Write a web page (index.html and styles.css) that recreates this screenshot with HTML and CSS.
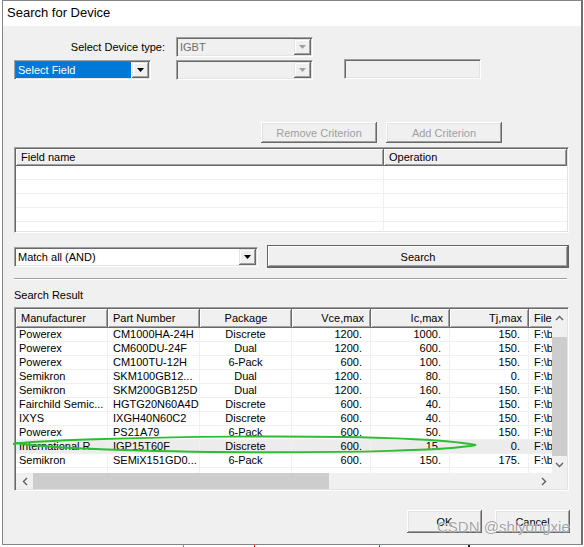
FILE: index.html
```html
<!DOCTYPE html>
<html lang="en">
<head>
    <meta charset="UTF-8">
    <title>Search for Device</title>
    <link rel="stylesheet" href="styles.css">
</head>
<body>
    <div class="window">
        <div class="titlebar">Search for Device</div>
        <div class="dialog">

            <div class="row-type">
                <span class="label">Select Device type:</span>
                <div class="combo disabled">
                    <span class="combo-text">IGBT</span>
                    <span class="drop"><svg width="7" height="4"><path d="M0 0h7L3.5 4z"/></svg></span>
                </div>
            </div>

            <div class="row-field">
                <div class="combo">
                    <span class="combo-text selected">Select Field</span>
                    <span class="drop"><svg width="7" height="4"><path d="M0 0h7L3.5 4z"/></svg></span>
                </div>
                <div class="combo disabled">
                    <span class="combo-text"></span>
                    <span class="drop"><svg width="7" height="4"><path d="M0 0h7L3.5 4z"/></svg></span>
                </div>
                <div class="edit disabled"></div>
            </div>

            <div class="row-crit-buttons">
                <button class="btn" disabled>Remove Criterion</button>
                <button class="btn" disabled>Add Criterion</button>
            </div>

            <div class="list crit-list">
                <div class="crit-cols crit-head">
                    <span class="hcell">Field name</span>
                    <span class="hcell">Operation</span>
                </div>
                <div class="crit-cols crit-row"><span></span><span></span></div>
                <div class="crit-cols crit-row"><span></span><span></span></div>
                <div class="crit-cols crit-row"><span></span><span></span></div>
                <div class="crit-cols crit-row"><span></span><span></span></div>
                <div class="crit-cols crit-row"><span></span><span></span></div>
            </div>

            <div class="row-match">
                <div class="combo match">
                    <span class="combo-text">Match all (AND)</span>
                    <span class="drop"><svg width="7" height="4"><path d="M0 0h7L3.5 4z"/></svg></span>
                </div>
                <button class="btn search">Search</button>
            </div>

            <div class="separator"></div>
            <div class="section-label">Search Result</div>

            <div class="list results">
                <div class="view">
                    <div class="cols grid-head">
                        <span class="hcell">Manufacturer</span>
                        <span class="hcell">Part Number</span>
                        <span class="hcell center">Package</span>
                        <span class="hcell right">Vce,max</span>
                        <span class="hcell right">Ic,max</span>
                        <span class="hcell right">Tj,max</span>
                        <span class="hcell">File</span>
                    </div>
                    <div class="cols grid-row"><span>Powerex</span><span>CM1000HA-24H</span><span class="center">Discrete</span><span class="right">1200.</span><span class="right">1000.</span><span class="right">150.</span><span>F:\bin\igbt\</span></div>
                    <div class="cols grid-row"><span>Powerex</span><span>CM600DU-24F</span><span class="center">Dual</span><span class="right">1200.</span><span class="right">600.</span><span class="right">150.</span><span>F:\bin\igbt\</span></div>
                    <div class="cols grid-row"><span>Powerex</span><span>CM100TU-12H</span><span class="center">6-Pack</span><span class="right">600.</span><span class="right">100.</span><span class="right">150.</span><span>F:\bin\igbt\</span></div>
                    <div class="cols grid-row"><span>Semikron</span><span>SKM100GB12...</span><span class="center">Dual</span><span class="right">1200.</span><span class="right">80.</span><span class="right">0.</span><span>F:\bin\igbt\</span></div>
                    <div class="cols grid-row"><span>Semikron</span><span>SKM200GB125D</span><span class="center">Dual</span><span class="right">1200.</span><span class="right">160.</span><span class="right">150.</span><span>F:\bin\igbt\</span></div>
                    <div class="cols grid-row"><span>Fairchild Semic...</span><span>HGTG20N60A4D</span><span class="center">Discrete</span><span class="right">600.</span><span class="right">40.</span><span class="right">150.</span><span>F:\bin\igbt\</span></div>
                    <div class="cols grid-row"><span>IXYS</span><span>IXGH40N60C2</span><span class="center">Discrete</span><span class="right">600.</span><span class="right">40.</span><span class="right">150.</span><span>F:\bin\igbt\</span></div>
                    <div class="cols grid-row"><span>Powerex</span><span>PS21A79</span><span class="center">6-Pack</span><span class="right">600.</span><span class="right">50.</span><span class="right">150.</span><span>F:\bin\igbt\</span></div>
                    <div class="cols grid-row hot"><span>International R...</span><span>IGP15T60F</span><span class="center">Discrete</span><span class="right">600.</span><span class="right">15.</span><span class="right">0.</span><span>F:\bin\igbt\</span></div>
                    <div class="cols grid-row"><span>Semikron</span><span>SEMiX151GD0...</span><span class="center">6-Pack</span><span class="right">600.</span><span class="right">150.</span><span class="right">175.</span><span>F:\bin\igbt\</span></div>
                    <div class="cols grid-row filler"><span></span><span></span><span></span><span></span><span></span><span></span><span></span></div>
                </div>
                <div class="vscroll">
                    <span class="arrow"><svg width="9" height="6"><polyline points="1,5 4.5,1.5 8,5"/></svg></span>
                    <span class="vthumb"></span>
                    <span class="arrow end"><svg width="9" height="6"><polyline points="1,1 4.5,4.5 8,1"/></svg></span>
                </div>
                <div class="hscroll">
                    <span class="arrow"><svg width="6" height="9"><polyline points="5,1 1.5,4.5 5,8"/></svg></span>
                    <span class="hthumb"></span>
                    <span class="arrow end"><svg width="6" height="9"><polyline points="1,1 4.5,4.5 1,8"/></svg></span>
                </div>
                <div class="corner"></div>
            </div>

            <div class="row-ok">
                <button class="btn dlg">OK</button>
                <button class="btn dlg">Cancel</button>
            </div>
        </div>
    </div>
    <div class="desk">
        <span class="tick grey"></span>
        <span class="tick red"></span>
        <span class="tick red second"></span>
        <span class="tick black"></span>
    </div>

    <svg class="markup" width="584" height="547">
        <path d="M13 444 C60 437 400 431 476 445 C420 456 80 454 16 443"/>
    </svg>
    <div class="watermark">CSDN @shiyongxie</div>
</body>
</html>
```

FILE: styles.css
```css
* {
    box-sizing: border-box;
}
body {
    margin: 0;
    width: 584px;
    height: 547px;
    overflow: hidden;
    position: relative;
    background: #fff;
    font-family: "Liberation Sans", Arial, sans-serif;
    font-size: 11px;
    color: #000;
}
button {
    font: inherit;
}

/* window frame */
.window {
    margin-left: 2px;
    width: 581px;
    height: 545px;
    border: 1px solid #858585;
    border-right: 2px solid #6e6e6e;
    background: #f0f0f0;
    display: flex;
    flex-direction: column;
}
.titlebar {
    flex: none;
    height: 25px;
    padding-left: 4px;
    background: #fff;
    font-size: 13px;
    line-height: 24px;
}
.dialog {
    flex: 1;
    padding: 0 12px 0 11px;
    display: flex;
    flex-direction: column;
}

/* classic controls */
.combo {
    display: flex;
    width: 137px;
    height: 20px;
    padding: 1px;
    border: 1px solid;
    border-color: #a0a0a0 #fff #fff #a0a0a0;
    box-shadow: inset 1px 1px #696969, inset -1px -1px #e3e3e3;
    background: #fff;
}
.combo-text {
    flex: 1;
    padding-left: 2px;
    line-height: 16px;
    white-space: nowrap;
    overflow: hidden;
}
.combo-text.selected {
    background: #0078d7;
    color: #fff;
    margin-right: 1px;
}
.drop {
    flex: none;
    width: 17px;
    display: flex;
    align-items: center;
    justify-content: center;
    background: #f0f0f0;
    box-shadow: inset -1px -1px #696969, inset 1px 1px #e3e3e3, inset -2px -2px #a0a0a0, inset 2px 2px #fff;
}
.drop svg {
    fill: #000;
}
.combo.disabled {
    background: #f0f0f0;
    color: #6d6d6d;
}
.combo.disabled .drop svg {
    fill: #a0a0a0;
}
.edit {
    width: 137px;
    height: 20px;
    border: 1px solid;
    border-color: #a0a0a0 #fff #fff #a0a0a0;
    box-shadow: inset 1px 1px #696969, inset -1px -1px #e3e3e3;
    background: #f0f0f0;
}
.btn {
    height: 21px;
    padding: 0;
    border: none;
    background: #f0f0f0;
    color: #000;
    box-shadow: inset -1px -1px #696969, inset 1px 1px #fff, inset -2px -2px #a0a0a0, inset 2px 2px #e3e3e3;
}
.btn:disabled {
    color: #a0a0a0;
}

/* rows */
.row-type {
    margin-top: 11px;
    display: flex;
    align-items: center;
}
.label {
    width: 151px;
    margin-right: 11px;
    text-align: right;
}
.row-field {
    margin-top: 3px;
    display: flex;
    align-items: flex-start;
}
.row-field .combo:first-child {
    margin-right: 25px;
}
.row-field .edit {
    margin-left: 31px;
    margin-top: -1px;
}
.row-crit-buttons {
    margin-top: 42px;
    padding-left: 247px;
    display: flex;
    gap: 9px;
}
.row-crit-buttons .btn {
    width: 116px;
}

/* list views */
.list {
    padding: 1px;
    border: 1px solid;
    border-color: #a0a0a0 #fff #fff #a0a0a0;
    box-shadow: inset 1px 1px #696969, inset -1px -1px #e3e3e3;
    background: #fff;
}
.hcell {
    padding: 0 5px;
    background: #f0f0f0;
    box-shadow: inset -1px -1px #696969, inset 1px 1px #fff, inset -2px -2px #a0a0a0;
    white-space: nowrap;
    overflow: hidden;
}
.crit-list {
    margin-top: 4px;
    height: 86px;
    overflow: hidden;
}
.crit-cols {
    display: grid;
    grid-template-columns: 368px 1fr;
}
.crit-head {
    height: 17px;
    line-height: 17px;
}
.crit-row {
    height: 14px;
    border-bottom: 1px solid #f0f0f0;
}
.crit-row span:first-child {
    border-right: 1px solid #f0f0f0;
}

.row-match {
    margin-top: 12px;
    height: 23px;
    display: flex;
    align-items: flex-start;
}
.combo.match {
    width: 244px;
    margin-top: 2px;
    height: 20px;
}
.combo.match .combo-text {
    padding-left: 2px;
}
.btn.search {
    flex: 1;
    height: 23px;
    margin-left: 9px;
    box-shadow: inset 0 0 0 1px #646464, inset -2px -2px #696969, inset 2px 2px #fff, inset -3px -3px #a0a0a0;
}
.separator {
    margin-top: 10px;
    margin-right: 2px;
    height: 2px;
    border-top: 1px solid #a0a0a0;
    border-bottom: 1px solid #fff;
}
.section-label {
    margin-top: 8px;
    line-height: 14px;
}

/* results grid */
.results {
    margin-top: 5px;
    height: 184px;
    display: grid;
    grid-template-columns: 1fr 15px;
    grid-template-rows: 1fr 16px;
}
.view {
    overflow: hidden;
}
.cols {
    display: grid;
    grid-template-columns: 92px 92px 92px 79px 79px 79px 120px;
    width: 613px;
}
.grid-head {
    height: 19px;
    line-height: 19px;
}
.grid-row {
    height: 14px;
    line-height: 13px;
}
.grid-row span {
    padding: 0 5px;
    border-right: 1px solid #f0f0f0;
    border-bottom: 1px solid #f0f0f0;
    white-space: nowrap;
    overflow: hidden;
}
.grid-row span:first-child {
    padding-left: 3px;
}
.grid-row.filler {
    height: 5px;
}
.grid-row.filler span {
    border-bottom: none;
}
.grid-row.hot {
    background: #ececec;
}
.center {
    text-align: center;
}
.right {
    text-align: right;
    padding-right: 8px !important;
}
.grid-head .right {
    padding-right: 7px !important;
}

/* scrollbars */
.vscroll,
.hscroll {
    display: flex;
    background: #f0f0f0;
}
.vscroll {
    flex-direction: column;
}
.arrow {
    flex: none;
    width: 17px;
    height: 17px;
    display: flex;
    align-items: center;
    justify-content: center;
}
.vscroll .arrow {
    width: 15px;
}
.hscroll .arrow {
    height: 16px;
}
.arrow svg {
    fill: none;
    stroke: #606060;
    stroke-width: 1.4;
}
.arrow.end {
    margin-top: auto;
}
.hscroll .arrow.end {
    margin-top: 0;
    margin-left: auto;
}
.vthumb {
    margin-top: 11px;
    height: 119px;
    background: #cdcdcd;
}
.hthumb {
    width: 296px;
    background: #cdcdcd;
}
.corner {
    background: #f0f0f0;
}

.row-ok {
    margin-top: 19px;
    margin-right: -1px;
    display: flex;
    justify-content: flex-end;
    gap: 13px;
}
.btn.dlg {
    width: 75px;
    height: 23px;
}

/* desktop behind the dialog */
.desk {
    display: flex;
    height: 2px;
}
.tick {
    width: 1px;
    height: 2px;
}
.tick.grey {
    margin-left: 183px;
    background: #8a8a8a;
}
.tick.red {
    margin-left: 70px;
    background: #e02020;
}
.tick.red.second {
    margin-left: 124px;
}
.tick.black {
    margin-left: 88px;
    width: 2px;
    background: #222;
}

/* overlays */
.markup {
    position: absolute;
    left: 0;
    top: 0;
    pointer-events: none;
}
.markup path {
    fill: none;
    stroke: #2dbd33;
    stroke-width: 2;
}
.watermark {
    position: absolute;
    left: 437px;
    top: 518px;
    font-size: 15px;
    color: rgba(120, 120, 120, 0.7);
    text-shadow: 0 0 1px #fff, 0 0 1px #fff;
    white-space: nowrap;
}
```
